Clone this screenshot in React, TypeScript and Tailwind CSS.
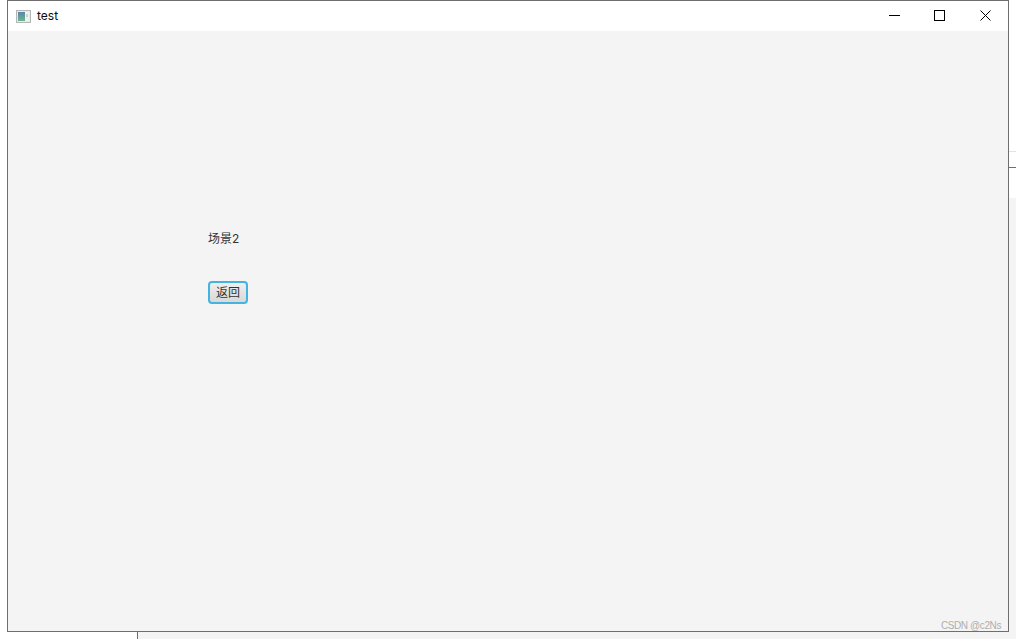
const cjk = "font-['Inter','Noto_Sans_CJK_SC',sans-serif]";

function WindowIcon() {
  return (
    <svg width="15" height="13" viewBox="0 0 15 13" className="shrink-0">
      <defs>
        <linearGradient id="pane" x1="0" y1="0" x2="0" y2="1">
          <stop offset="0" stopColor="#5a86a6" />
          <stop offset="1" stopColor="#6cb592" />
        </linearGradient>
      </defs>
      <rect x="0.5" y="0.5" width="14" height="12" fill="#e8eaea" stroke="#b4b6b7" />
      <rect x="2" y="2" width="7" height="9" fill="url(#pane)" />
      <rect x="9" y="2" width="4" height="9" fill="#eef3f0" />
      <rect x="10" y="4" width="2" height="3" fill="#c4d8cf" />
    </svg>
  );
}

function TitleBar() {
  return (
    <div className="flex h-[30px] items-center bg-white">
      <div className="ml-2 flex items-center gap-[6px]">
        <WindowIcon />
        <span className={`${cjk} text-xs text-[#0c0c0c]`}>test</span>
      </div>
      <div className="ml-auto mr-[17px] flex h-full items-start pt-[9px]">
        <button className="flex">
          <svg width="11" height="11" viewBox="0 0 11 11">
            <path d="M0 5.5H11" stroke="#000" strokeWidth="1" />
          </svg>
        </button>
        <button className="ml-[34px] flex">
          <svg width="11" height="11" viewBox="0 0 11 11">
            <rect x="0.5" y="0.5" width="10" height="10" fill="none" stroke="#000" strokeWidth="1" />
          </svg>
        </button>
        <button className="ml-[35px] flex">
          <svg width="11" height="11" viewBox="0 0 11 11">
            <path d="M0.5 0.5L10.5 10.5M10.5 0.5L0.5 10.5" stroke="#000" strokeWidth="1" />
          </svg>
        </button>
      </div>
    </div>
  );
}

export default function App() {
  return (
    <div className="relative h-[639px] w-[1016px] overflow-hidden bg-white">
      {/* things behind the window */}
      <div className="absolute left-[1009px] top-[151px] h-px w-[7px] bg-[#e3e3e3]" />
      <div className="absolute left-[1009px] top-[167px] h-px w-[7px] bg-[#6e6e6e]" />
      <div className="absolute left-[1009px] top-[198px] h-[441px] w-[7px] bg-[#f4f4f4]" />
      <div className="absolute left-[137px] top-[632px] h-[7px] w-px bg-[#6e6e6e]" />
      <div className="absolute left-[138px] top-[632px] h-[7px] w-[878px] bg-[#f4f4f4]" />

      <div className="absolute left-[7px] top-0 flex h-[632px] w-[1002px] flex-col border border-[#6e6e6e]">
        <TitleBar />
        <div className={`${cjk} relative flex-1 bg-[#f4f4f4] pl-[200px] pt-[199px] text-xs text-[#333]`}>
          <div className="h-[17px] leading-[17px]">场景2</div>
          <button className="mt-[34px] flex h-[23px] w-[40px] items-center justify-center rounded-[4px] border-2 border-[#45b3e0] bg-gradient-to-b from-[#eeeeee] to-[#d9d9d9]">
            返回
          </button>
          <span className="absolute bottom-[-1px] right-[7px] font-['Liberation_Sans',sans-serif] text-[10px] leading-[13px] tracking-[-0.4px] text-[#aeaeae]">
            CSDN @c2Ns
          </span>
        </div>
      </div>
    </div>
  );
}
